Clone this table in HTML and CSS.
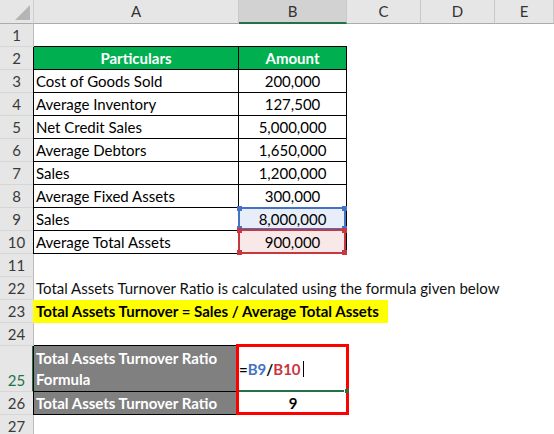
FILE: index.html
```html
<!DOCTYPE html>
<html>
<head>
<meta charset="utf-8">
<link rel="stylesheet" href="styles.css">
</head>
<body>
<div class="sheet">
  <div class="row hdr">
    <div class="corner"><svg width="33" height="23" viewBox="0 0 33 23"><polygon points="30,5 30,20 15,20" fill="#b5b5b5"/></svg></div>
    <div class="ch">A</div>
    <div class="ch sel">B</div>
    <div class="ch">C</div>
    <div class="ch">D</div>
    <div class="ch">E</div>
  </div>
  <div class="row">
    <div class="rh">1</div>
    <div class="c topb"></div><div class="c topb"></div><div class="c"></div><div class="c"></div><div class="c"></div>
  </div>
  <div class="row">
    <div class="rh">2</div>
    <div class="c t ta head">Particulars</div><div class="c t head">Amount</div><div class="c"></div><div class="c"></div><div class="c"></div>
  </div>
  <div class="row">
    <div class="rh">3</div>
    <div class="c t ta">Cost of Goods Sold</div><div class="c t num">200,000</div><div class="c"></div><div class="c"></div><div class="c"></div>
  </div>
  <div class="row">
    <div class="rh">4</div>
    <div class="c t ta">Average Inventory</div><div class="c t num">127,500</div><div class="c"></div><div class="c"></div><div class="c"></div>
  </div>
  <div class="row">
    <div class="rh">5</div>
    <div class="c t ta">Net Credit Sales</div><div class="c t num">5,000,000</div><div class="c"></div><div class="c"></div><div class="c"></div>
  </div>
  <div class="row">
    <div class="rh">6</div>
    <div class="c t ta">Average Debtors</div><div class="c t num">1,650,000</div><div class="c"></div><div class="c"></div><div class="c"></div>
  </div>
  <div class="row">
    <div class="rh">7</div>
    <div class="c t ta">Sales</div><div class="c t num">1,200,000</div><div class="c"></div><div class="c"></div><div class="c"></div>
  </div>
  <div class="row">
    <div class="rh">8</div>
    <div class="c t ta">Average Fixed Assets</div><div class="c t num">300,000</div><div class="c"></div><div class="c"></div><div class="c"></div>
  </div>
  <div class="row">
    <div class="rh">9</div>
    <div class="c t ta">Sales</div>
    <div class="c t num ref-blue">8,000,000<span class="refbox blue"><i class="h tl"></i><i class="h tr"></i><i class="h bl"></i><i class="h br"></i></span></div>
    <div class="c"></div><div class="c"></div><div class="c"></div>
  </div>
  <div class="row">
    <div class="rh">10</div>
    <div class="c t ta">Average Total Assets</div>
    <div class="c t num ref-red">900,000<span class="refbox red"><i class="h tl"></i><i class="h tr"></i><i class="h bl"></i><i class="h br"></i></span></div>
    <div class="c"></div><div class="c"></div><div class="c"></div>
  </div>
  <div class="row">
    <div class="rh">11</div>
    <div class="c"></div><div class="c"></div><div class="c"></div><div class="c"></div><div class="c"></div>
  </div>
  <div class="row">
    <div class="rh">22</div>
    <div class="c span txt">Total Assets Turnover Ratio is calculated using the formula given below</div>
  </div>
  <div class="row">
    <div class="rh">23</div>
    <div class="c span"><div class="hl">Total Assets Turnover = Sales / Average Total Assets</div></div>
  </div>
  <div class="row">
    <div class="rh">24</div>
    <div class="c botb"></div><div class="c"></div><div class="c"></div><div class="c"></div><div class="c"></div>
  </div>
  <div class="row tall">
    <div class="rh cur">25</div>
    <div class="c t ta gray wrap"><span>Total Assets Turnover Ratio</span><span>Formula</span></div>
    <div class="c formula">
      <b>=</b><b class="fb">B9</b><b>/</b><b class="fr">B10</b><span class="caret"></span>
      <span class="active-line"></span><span class="fill-handle"></span>
      <span class="redbox"></span>
    </div>
    <div class="c"></div><div class="c"></div><div class="c"></div>
  </div>
  <div class="row">
    <div class="rh">26</div>
    <div class="c t ta gray">Total Assets Turnover Ratio</div><div class="c num bold">9</div><div class="c"></div><div class="c"></div><div class="c"></div>
  </div>
  <div class="row">
    <div class="rh">27</div>
    <div class="c"></div><div class="c"></div><div class="c"></div><div class="c"></div><div class="c"></div>
  </div>
</div>
</body>
</html>
```
FILE: styles.css
```css
* { box-sizing: border-box; margin: 0; padding: 0; }
html, body { width: 554px; height: 434px; overflow: hidden; background: #fff; }
body { font-family: Lato, "Liberation Sans", sans-serif; font-size: 15px; color: #000; }

.row {
  display: grid;
  grid-template-columns: 34px 205px 108px 74px 74px 59px;
  height: 23px;
}
.hdr { height: 24px; }
.tall { height: 46px; }

.corner {
  background: #e6e6e6;
  border-right: 1px solid #cfcfcf;
  border-bottom: 1px solid #ababab;
}
.corner svg { display: block; }

.ch {
  background: #e6e6e6;
  border-right: 1px solid #c9c9c9;
  border-bottom: 1px solid #ababab;
  text-align: center;
  line-height: 22px;
  color: #333;
}
.ch.sel { background: #d2d2d2; border-bottom: 2px solid #217346; }

.rh {
  background: #e6e6e6;
  border-right: 1px solid #bcbcbc;
  border-bottom: 1px solid #d6d6d6;
  color: #3a3a3a;
  display: flex;
  align-items: flex-end;
  justify-content: center;
  line-height: 22px;
}
.rh.cur { border-right: 2px solid #217346; color: #217346; padding-left: 1px; line-height: 21px; }

.c {
  position: relative;
  white-space: nowrap;
  line-height: 22px;
  padding-left: 2px;
}
.span { grid-column: 2 / -1; }

.topb { border-bottom: 1px solid #000; }
.botb { border-bottom: 1px solid #000; }
.t { border-right: 1px solid #000; border-bottom: 1px solid #000; }
.ta { box-shadow: -1px 0 0 #000; }

.head { background: #00b050; color: #fff; font-weight: 700; text-align: center; padding-left: 0; }
.num { text-align: center; padding-left: 0; }
.bold { font-weight: 700; }

.ref-blue { background: #e7eef9; }
.ref-red { background: #f9e8e8; }
.refbox { position: absolute; border: 2px solid; pointer-events: none; }
.refbox.blue { border-color: #4472c4; left: -1px; top: -1px; right: 0; bottom: 0; z-index: 1; }
.refbox.red { border-color: #c8373f; left: -1px; top: -2px; right: 0; bottom: -1px; z-index: 2; }
.refbox .h { position: absolute; width: 5px; height: 5px; }
.refbox.blue .h { background: #4472c4; }
.refbox.red .h { background: #c8373f; }
.h.tl { left: -3px; top: -3px; }
.h.tr { right: -3px; top: -3px; }
.h.bl { left: -3px; bottom: -3px; }
.h.br { right: -3px; bottom: -3px; }

.txt { color: #111; }
.hl { width: 355px; margin-left: -3px; padding-left: 3px; background: #ffff00; font-weight: 700; height: 23px; }

.gray { background: #808080; color: #fff; font-weight: 700; }
.wrap { display: flex; flex-direction: column; justify-content: flex-end; line-height: 21px; padding-bottom: 1px; }

.formula { display: flex; align-items: center; padding-left: 0; }
.formula b { font-weight: 700; }
.fb { color: #4472c4; }
.fr { color: #c8373f; }
.caret { display: inline-block; width: 1px; height: 16px; background: #000; margin-left: 2px; }
.active-line { position: absolute; left: 0; top: 44px; width: 105px; height: 2px; background: #217346; z-index: 3; }
.fill-handle { position: absolute; left: 106px; top: 43px; width: 4px; height: 4px; background: #217346; z-index: 5; }
.redbox { position: absolute; left: -3px; top: -2px; width: 113px; height: 71px; border: 3px solid #ff0000; z-index: 4; }
```
